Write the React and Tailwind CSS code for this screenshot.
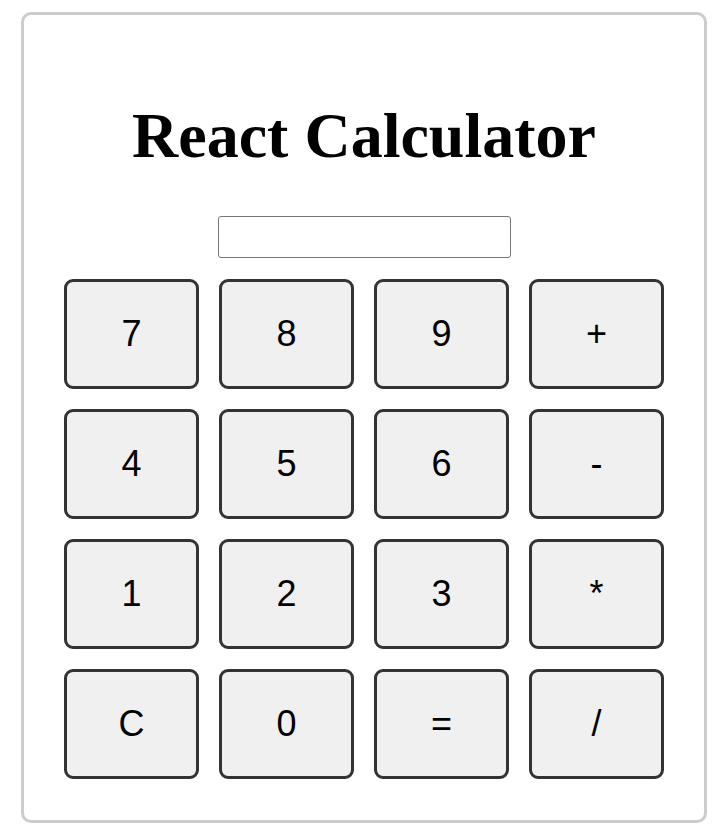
import React, { useState } from 'react'

const KEYS = ['7', '8', '9', '+', '4', '5', '6', '-', '1', '2', '3', '*', 'C', '0', '=', '/']

export default function App() {
  const [value, setValue] = useState('')

  function press(k) {
    if (k === 'C') setValue('')
    else if (k === '=') {
      try {
        // eslint-disable-next-line no-new-func
        setValue(String(Function('return (' + value + ')')()))
      } catch (e) {
        setValue('Error')
      }
    } else setValue(value + k)
  }

  return (
    <div className="min-h-screen bg-white pt-[12px] pl-[21px]">
      <div className="w-[686px] h-[811px] rounded-[10px] border-[3px] border-[#cccccc] bg-white flex flex-col items-center pt-[89px]">
        <h1
          className="text-[64px] leading-[64px] font-bold text-black"
          style={{ fontFamily: '"Liberation Serif", "Times New Roman", serif' }}
        >
          React Calculator
        </h1>

        <input
          type="text"
          value={value}
          onChange={(e) => setValue(e.target.value)}
          className="mt-[48px] w-[293px] h-[42px] rounded-[3px] border border-[#767676] bg-white px-2 text-[20px] outline-none"
          style={{ fontFamily: '"Liberation Sans", Arial, sans-serif' }}
        />

        <div className="mt-[21px] grid grid-cols-4 gap-[20px]">
          {KEYS.map((k) => (
            <button
              key={k}
              type="button"
              onClick={() => press(k)}
              className="w-[135px] h-[110px] rounded-[9px] border-[3px] border-[#333333] bg-[#f0f0f0] text-[36px] text-black flex items-center justify-center"
              style={{ fontFamily: '"Liberation Sans", Arial, sans-serif' }}
            >
              {k}
            </button>
          ))}
        </div>
      </div>
    </div>
  )
}
